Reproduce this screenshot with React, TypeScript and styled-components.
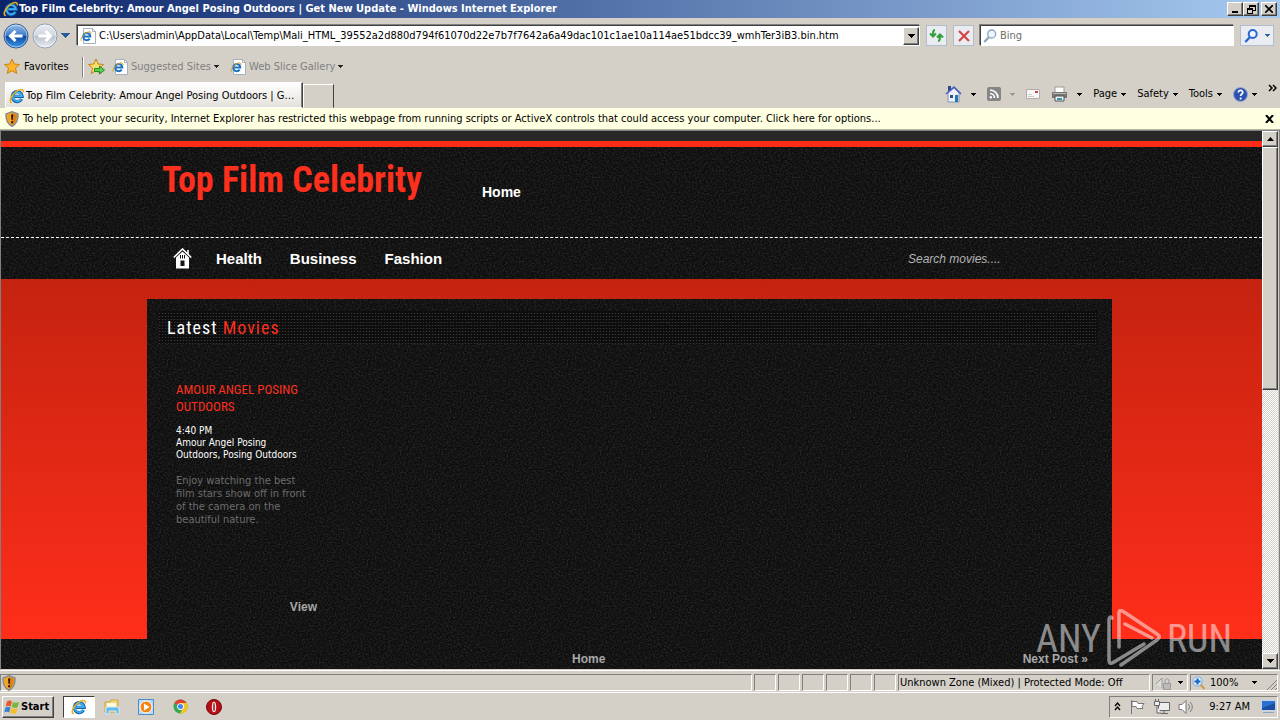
import React from 'react';
import styled, { createGlobalStyle, css } from 'styled-components';

const ui = '"DejaVu Sans Condensed", "DejaVu Sans", sans-serif';
const display = '"Roboto Condensed", "Liberation Sans Narrow", "Liberation Sans", sans-serif';
const grain = `url("data:image/svg+xml,%3Csvg xmlns='http://www.w3.org/2000/svg' width='200' height='200'%3E%3Cfilter id='n'%3E%3CfeTurbulence type='fractalNoise' baseFrequency='.6' numOctaves='2' stitchTiles='stitch'/%3E%3CfeColorMatrix values='0 0 0 0 1 0 0 0 0 1 0 0 0 0 1 .24 0 0 0 -.09'/%3E%3C/filter%3E%3Crect width='200' height='200' filter='url(%23n)'/%3E%3C/svg%3E")`;

const Global = createGlobalStyle`
  * { box-sizing: border-box; }
  body { margin: 0; background: #d4d0c8; color: #000; font: 11px/14px ${ui}; }
  button, input { font: inherit; color: inherit; margin: 0; padding: 0; border: 0; background: none; border-radius: 0; }
  h1, h2, h3, p { margin: 0; font-weight: normal; }
  a { color: inherit; text-decoration: none; }
  svg { display: block; flex: none; }
`;

const raised = css`
  background: #d4d0c8;
  border: 1px solid;
  border-color: #fff #404040 #404040 #fff;
  box-shadow: inset -1px -1px #808080;
`;
const sunken = css`
  border: 1px solid;
  border-color: #808080 #fff #fff #808080;
`;
const texture = css`
  background: #0d0d0d ${grain};
`;

const Window = styled.div`
  display: flex;
  flex-direction: column;
  height: 100vh;
  overflow: hidden;
  white-space: nowrap;
`;
const TitleBar = styled.header`
  display: flex;
  align-items: center;
  height: 18px;
  flex: none;
  padding: 0 3px;
  color: #fff;
  font-weight: bold;
  background: linear-gradient(90deg, #0a246a, #a6caf0);
`;
const TitleText = styled.span`flex: 1;`;
const WindowButton = styled.button<{ $gap?: boolean }>`
  ${raised}
  display: grid;
  place-items: center;
  width: 16px;
  height: 14px;
  margin-left: ${p => (p.$gap ? 2 : 0)}px;
`;
const AddressRow = styled.div`
  display: flex;
  align-items: center;
  flex: none;
  height: 35px;
  padding: 0 6px 0 3px;
  gap: 6px;
`;
const Nav = styled.div`
  display: flex;
  align-items: center;
  gap: 3px;
  width: 68px;
`;
const IconButton = styled.button`
  display: flex;
  align-items: center;
`;
const Field = styled.label<{ $basis?: number }>`
  display: flex;
  align-items: center;
  height: 21px;
  gap: 3px;
  padding-left: 2px;
  background: #fff;
  border: 1px solid;
  border-color: #404040 #fff #fff #404040;
  box-shadow: -1px -1px #808080;
  ${p => (p.$basis ? `flex: 0 1 ${p.$basis}px;` : 'flex: 1;')}
`;
const TextInput = styled.input`
  flex: 1;
  min-width: 0;
  outline: 0;
  height: 17px;
  &::placeholder { color: #6d6d6d; opacity: 1; }
`;
const DropButton = styled.button`
  ${raised}
  display: grid;
  place-items: center;
  width: 16px;
  height: 18px;
`;
const SoftButton = styled.button<{ $wide?: boolean }>`
  display: flex;
  align-items: center;
  justify-content: space-around;
  width: ${p => (p.$wide ? 34 : 21)}px;
  height: 21px;
  border: 1px solid #b4bccb;
  background: #e9ecf1;
`;
const FavoritesRow = styled.div`
  display: flex;
  align-items: center;
  flex: none;
  height: 27px;
  padding: 0 4px;
`;
const FavButton = styled.button<{ $muted?: boolean; $width?: number }>`
  display: flex;
  align-items: center;
  gap: 3px;
  color: ${p => (p.$muted ? '#808080' : '#000')};
  ${p => p.$width && `width: ${p.$width}px;`}
`;
const Rule = styled.span`
  width: 2px;
  height: 20px;
  margin-right: 4px;
  border-left: 1px solid #808080;
  border-right: 1px solid #fff;
`;
const TabRow = styled.div`
  display: flex;
  align-items: flex-end;
  flex: none;
  height: 28px;
  padding-left: 5px;
`;
const Tab = styled.button`
  display: flex;
  align-items: center;
  gap: 1px;
  width: 298px;
  height: 26px;
  padding: 2px 3px 0;
  background: linear-gradient(#fff, #e4e1db);
  border: 1px solid;
  border-color: #fff #404040 transparent #fff;
  box-shadow: inset -1px 0 #808080;
  span { overflow: hidden; text-overflow: ellipsis; }
`;
const NewTab = styled.button`
  width: 31px;
  height: 24px;
  border: 1px solid;
  border-color: #fff #404040 transparent #fff;
`;
const Commands = styled.div`
  display: flex;
  align-items: center;
  gap: 11px;
  height: 28px;
  margin-left: auto;
  padding-right: 3px;
`;
const Command = styled.button<{ $spaced?: boolean }>`
  display: flex;
  align-items: center;
  gap: ${p => (p.$spaced ? 9 : 4)}px;
`;
const InfoBar = styled.div`
  display: flex;
  align-items: center;
  flex: none;
  height: 22px;
  padding: 0 6px 0 5px;
  gap: 4px;
  background: #ffffe1;
  border-bottom: 1px solid #b8b8a4;
`;
const InfoText = styled.button`flex: 1; text-align: left;`;

const Viewport = styled.div`
  display: flex;
  flex: 1;
  min-height: 0;
  padding-right: 1px;
  border: 1px solid #808080;
  border-bottom-color: #d4d0c8;
`;
const Page = styled.main`
  position: relative;
  flex: 1;
  display: flex;
  flex-direction: column;
  overflow: hidden;
  font-family: "Liberation Sans", Arial, sans-serif;
  color: #fff;
`;
const TopStrip = styled.div`
  flex: none;
  height: 16px;
  background: #282828;
  border-bottom: 6px solid #fd2c19;
`;
const Masthead = styled.header`
  ${texture}
  flex: none;
  height: 91px;
  padding-right: 4px;
  border-bottom: 1px dashed #fff;
`;
const Wrap = styled.div`
  display: flex;
  width: 965px;
  max-width: 100%;
  margin: 0 auto;
`;
const SiteTitle = styled.h1`
  width: 335px;
  padding: 10px 0 0 15px;
  color: #fd2f1d;
  font: bold 36px/46px ${display};
`;
const TopLink = styled.a`
  padding-top: 36px;
  font-weight: bold;
  font-size: 14px;
  line-height: 18px;
`;
const Menu = styled.nav`
  ${texture}
  flex: none;
  height: 41px;
  padding-right: 4px;
`;
const MenuInner = styled(Wrap)`
  align-items: center;
  height: 41px;
  gap: 28px;
  padding: 0 78px 0 26px;
  font-weight: bold;
  font-size: 15px;
  line-height: 18px;
`;
const HomeLink = styled.a`margin-right: -4px;`;
const SearchInput = styled.input`
  width: 126px;
  margin-left: auto;
  font-style: italic;
  font-size: 12px;
  font-weight: normal;
  &::placeholder { color: #b4b4b4; opacity: 1; }
`;
const Backdrop = styled.div`
  flex: 1;
  min-height: 0;
  display: flex;
  padding: 20px 4px 0 0;
  background: linear-gradient(#c42310, #ff2e1a);
`;
const Panel = styled.section`
  ${texture}
  width: 965px;
  max-width: 100%;
  margin: 0 auto;
  padding: 12px 14px 0 12px;
`;
const PanelTitle = styled.h2`
  height: 33px;
  padding-left: 8px;
  font: 18px/33px ${display};
  letter-spacing: 1px;
  background: conic-gradient(#333 25%, transparent 0) 0 0 / 3px 3px;
  background: linear-gradient(#0d0d0d 2px, transparent 2px) 0 0 / 3px 3px, linear-gradient(90deg, #363636 1px, transparent 1px) 0 0 / 3px 3px;
  span { color: #fd2f1d; }
`;
const Post = styled.article`
  width: 158px;
  padding: 37px 0 0 17px;
  font-family: ${ui};
  white-space: normal;
`;
const PostTitle = styled.h3`
  width: 136px;
  color: #fd2f1d;
  font: 13px/17px ${display};
  text-transform: uppercase;
`;
const Meta = styled.p`
  width: 136px;
  margin-top: 10px;
  font-size: 10px;
  line-height: 12px;
`;
const Blurb = styled.p`
  width: 136px;
  margin-top: 13px;
  color: #6c6c6c;
  line-height: 13px;
`;
const ViewLink = styled.a`
  display: block;
  margin-top: 73px;
  text-align: right;
  color: #a8a8a8;
  font: bold 12px/16px "Liberation Sans", sans-serif;
`;
const Pager = styled.footer`
  ${texture}
  flex: none;
  height: 30px;
  padding-right: 4px;
`;
const PagerInner = styled(Wrap)`
  justify-content: space-between;
  padding: 12px 24px 0 425px;
  color: #a8a8a8;
  font-weight: bold;
  font-size: 12px;
  line-height: 16px;
`;
const Watermark = styled.div`
  position: absolute;
  right: 30px;
  bottom: 0;
  display: flex;
  align-items: center;
  gap: 6px;
  color: #fff;
  opacity: 0.5;
  pointer-events: none;
  font: 38px/60px ${display};
`;
const Scrollbar = styled.div`
  display: flex;
  flex-direction: column;
  flex: none;
  width: 16px;
  background: repeating-conic-gradient(#fff 0 25%, #d4d0c8 0 50%) 0 0 / 2px 2px;
`;
const ScrollButton = styled.button`
  ${raised}
  display: grid;
  place-items: center;
  height: 16px;
`;
const ScrollThumb = styled.div`
  ${raised}
  height: 48%;
`;
const Track = styled.div`flex: 1;`;

const StatusBar = styled.div`
  display: flex;
  flex: none;
  height: 23px;
  gap: 2px;
  padding: 3px 2px 1px 0;
  border-top: 1px solid #fff;
  border-bottom: 1px solid #fff;
`;
const Cell = styled.div<{ $width?: number }>`
  ${sunken}
  display: flex;
  align-items: center;
  gap: 4px;
  padding-left: 1px;
  ${p => (p.$width ? `width: ${p.$width}px; flex: none;` : 'flex: 1;')}
`;
const Taskbar = styled.footer`
  display: flex;
  align-items: center;
  flex: none;
  height: 27px;
  padding: 0 2px;
`;
const StartButton = styled.button`
  ${raised}
  display: flex;
  align-items: center;
  gap: 1px;
  width: 52px;
  height: 22px;
  padding-left: 1px;
  margin-right: 9px;
  font-weight: bold;
`;
const TaskButton = styled.button<{ $active?: boolean }>`
  display: grid;
  place-items: center;
  width: ${p => (p.$active ? 32 : 34)}px;
  height: 22px;
  ${p => p.$active && `background: #fff; border: 1px solid; border-color: #404040 #fff #fff #404040;`}
`;
const Tray = styled.div`
  ${sunken}
  display: flex;
  align-items: center;
  gap: 8px;
  height: 22px;
  margin-left: auto;
  padding: 0 1px 0 4px;
`;
const Clock = styled.time`margin: 0 3px 0 7px;`;

const Caret = ({ color = '#000', size = 5 }: { color?: string; size?: number }) => (
  <svg width={size} height={Math.ceil(size / 2)} viewBox="0 0 6 3" shapeRendering="crispEdges"><path d="M0 0h6L3 3z" fill={color} /></svg>
);
const IELogo = ({ size = 16 }: { size?: number }) => (
  <svg width={size} height={size} viewBox="0 0 16 16" fill="none">
    <path d="M12.6 11A5 5 0 1 1 13.2 8.3H5.2" stroke="#145fae" strokeWidth="3.2" />
    <path d="M12.2 11A4.6 4.6 0 1 1 12.8 8.1H5.4" stroke="#3fb0ef" strokeWidth="1.8" />
    <path d="M3 14.6C-.7 14.6 1.7 7.8 6.6 4 10.4 1 15 .4 14.3 4.4" stroke="#e9ae18" strokeWidth="1.5" />
  </svg>
);
const IEPage = () => (
  <svg width="16" height="16" viewBox="0 0 16 16" fill="none">
    <path d="M3.5.5h9l3 3v12h-12z" fill="#fff" stroke="#a7b0bd" /><path d="M12.5.5v3h3" stroke="#a7b0bd" />
    <path d="M9.7 10.6A3.6 3.6 0 1 1 10.3 8.6H4" stroke="#1b73c4" strokeWidth="2" />
    <path d="M1.6 13C-.2 11.5 2.5 7 6 5s5.500-1.200 5 1" stroke="#d8a520" />
  </svg>
);
const Round = ({ flip, blue }: { flip?: boolean; blue?: boolean }) => (
  <svg width="26" height="26" viewBox="0 0 26 26" fill="none">
    <defs>
      <linearGradient id={blue ? 'rb' : 'rg'} x2="0" y2="1">
        <stop stopColor={blue ? '#9cc2ea' : '#eceff4'} /><stop offset=".48" stopColor={blue ? '#3b78c8' : '#cfd4de'} />
        <stop offset=".5" stopColor={blue ? '#0d469f' : '#b6becb'} /><stop offset="1" stopColor={blue ? '#3b9be8' : '#eef1f5'} />
      </linearGradient>
    </defs>
    <circle cx="13" cy="13" r="12" fill={`url(#${blue ? 'rb' : 'rg'})`} stroke={blue ? '#315b94' : '#8f9db4'} />
    <circle cx="13" cy="13" r="11" stroke="#fff" strokeOpacity=".5" />
    <path d={flip ? 'M6.500 13h12M13.500 8l5 5-5 5' : 'M19.500 13h-12M12.500 8l-5 5 5 5'} stroke="#fff" strokeWidth="3" />
  </svg>
);
const Shield = () => (
  <svg width="14" height="16" viewBox="0 0 14 16">
    <path d="M7 .7 13 3c.4 6-1.500 10-6 12.300C2.500 13 .6 9 1 3z" fill="#f0a52a" stroke="#7d8798" strokeWidth="1.300" />
    <path d="M7 2v12c3.500-2 5-5.500 4.800-10.200z" fill="#d9801c" /><path d="M6 3.500h2.200L7.700 9H6.500zM6.100 10.200h2v2h-2z" fill="#2d1600" />
  </svg>
);
const Star = ({ add }: { add?: boolean }) => (
  <svg width="17" height="17" viewBox="0 0 17 17">
    <path d="m8 1 2.200 5 5.300.5-4 3.600 1.200 5.400L8 12.700l-4.700 2.800 1.200-5.400-4-3.600L5.800 6z" fill={add ? '#f8dd68' : '#fbb52d'} stroke="#c78414" />
    {add && <path d="M6.500 10.500h5V8l5 4-5 4v-2.500h-5z" fill="#5bd04c" stroke="#238a24" />}
  </svg>
);
const Lens = ({ color, flip, size = 14 }: { color: string; flip?: boolean; size?: number }) => (
  <svg width={size} height={size} viewBox="0 0 14 14" fill="none" stroke={color}>
    <circle cx="8.700" cy="5" r="4" strokeWidth={flip ? 1.300 : 2} fill="#eef5ff" /><path d="M6 8 1.300 13" strokeWidth="2.400" />
  </svg>
);
const HouseIcon = () => (
  <svg width="17" height="18" viewBox="0 0 17 18">
    <path d="M3 1h3v5H3z" fill="#31449b" /><path d="M3 8 9 3l5 5v9H3z" fill="#edf1fb" stroke="#8594bb" />
    <path d="m1 9 8-7 7 7" fill="none" stroke="#4961b8" strokeWidth="1.600" /><path d="M5 10h3v3H5z" fill="#344b86" /><path d="M10 10h3v7h-3z" fill="#2678ac" />
  </svg>
);
const RssIcon = () => (
  <svg width="14" height="14" viewBox="0 0 14 14" fill="none" stroke="#fff" strokeWidth="1.700">
    <rect width="14" height="14" rx="2" fill="#858585" stroke="none" /><path d="M3 6.500A4.500 4.500 0 0 1 7.500 11M3 3a8 8 0 0 1 8 8" /><circle cx="3.800" cy="10.200" r="1.200" fill="#fff" stroke="none" />
  </svg>
);
const MailIcon = () => (
  <svg width="14" height="10" viewBox="0 0 14 10"><path d="M.5.500h13v9H.500z" fill="#f8f5f5" stroke="#b5aaaa" /><path d="M9 2h3v2H9z" fill="#c94444" /><path d="M2 5.500h4M2 7.500h6" stroke="#ccc" /></svg>
);
const PrinterIcon = () => (
  <svg width="17" height="16" viewBox="0 0 17 16"><path d="M4 1h9v6H4z" fill="#fff" stroke="#999" /><path d="M1 6h15v6H1z" fill="#777" /><path d="M2 7h13v1H2z" fill="#b6b6b6" /><path d="M4 10h9v5H4z" fill="#e6f2f6" stroke="#555" /><path d="M6 12h5v2H6z" fill="#3b93a7" /></svg>
);
const HelpIcon = () => (
  <svg width="15" height="15" viewBox="0 0 15 15" fill="none"><circle cx="7.500" cy="7.500" r="7" fill="#2c51b1" stroke="#9dabc8" /><path d="M5.300 5.500c0-3 4.600-2.700 4.500 0 0 1.500-2.200 1.500-2.200 3.500M7.600 10.500v2" stroke="#fff" strokeWidth="1.700" /></svg>
);
const ZoomIcon = () => (
  <svg width="14" height="14" viewBox="0 0 14 14" fill="none"><path d="m8.500 8.500 4 4.500" stroke="#d19a49" strokeWidth="2.200" /><circle cx="5.500" cy="5.500" r="4.700" fill="#d9edff" stroke="#78a8d8" /><path d="M5.500 2.500v6M2.500 5.500h6" stroke="#1563bd" strokeWidth="2" /></svg>
);
const WindowsFlag = () => (
  <svg width="16" height="16" viewBox="0 0 16 16"><path d="M3 2.500c2-1.400 3.400-1 5 0L6.700 7.600c-1.700-1-3.200-1-5 0z" fill="#e8562b" /><path d="M9 3c2 1 3.800 1 6-.2L13.700 8c-2 1.200-3.900 1-6 0z" fill="#79b63c" /><path d="M1.500 8.600c1.800-1.200 3.300-1 5 0L5.200 13.500c-1.600-1-3-1-5 0z" fill="#3b80d2" /><path d="M7.400 9c2.200 1 4 1 6.100 0l-1.300 5c-2.200 1.200-4 1-6.100 0z" fill="#f6bf29" /></svg>
);
const Folder = () => (
  <svg width="16" height="16" viewBox="0 0 16 16"><path d="M1 3h5l1-2h7v12H1z" fill="#f4d775" stroke="#c9a544" /><path d="M3 4h9v4H3z" fill="#fffbe1" /><path d="M2 8h13v7h-3v-3H5v3H2z" fill="#65b9e8" stroke="#d3eafa" /></svg>
);
const Media = () => (
  <svg width="16" height="16" viewBox="0 0 16 16"><path d="M.5.500h15v15H.500z" fill="#b9daf6" stroke="#4d8ccc" /><circle cx="8" cy="8" r="6" fill="#f58616" stroke="#fff" /><path d="m6 4.500 5.500 3.500L6 11.500z" fill="#fff" /></svg>
);
const Chrome = () => (
  <svg width="15" height="15" viewBox="0 0 16 16"><circle cx="8" cy="8" r="7.500" fill="#35a853" /><path d="M8 8 1.500 4.300A7.500 7.500 0 0 1 14.500 4.300H8z" fill="#e3402f" /><path d="M8 8V4.300h6.500A7.500 7.500 0 0 1 7.500 15.500L11 9.500z" fill="#fbc617" /><circle cx="8" cy="8" r="3.600" fill="#fff" /><circle cx="8" cy="8" r="2.700" fill="#4285f4" /></svg>
);
const Opera = () => (
  <svg width="16" height="16" viewBox="0 0 16 16"><circle cx="8" cy="8" r="7.500" fill="#b50e17" stroke="#7c0509" /><ellipse cx="8" cy="8" rx="2.200" ry="5.300" fill="#f5e9e9" /><ellipse cx="8" cy="8" rx=".8" ry="4.300" fill="#a31319" /></svg>
);
const WhiteHouse = () => (
  <svg width="19" height="21" viewBox="0 0 19 21"><path d="M.8 9.500 9.500 1l8.700 8.500M15 2v4" fill="none" stroke="#fff" strokeWidth="1.600" /><path fillRule="evenodd" d="m9.500 3.500 6.500 6V20.500H3V9.500zM7.500 12.500v5.500h4v-5.500z" fill="#fff" /><path d="M7.500 7v3.500M9.500 7v3.500M11.500 7v3.500" stroke="#111" /></svg>
);
const PlayMark = () => (
  <svg width="54" height="60" viewBox="0 0 54 60" fill="none" stroke="#fff" strokeWidth="3.500" strokeLinecap="round" strokeLinejoin="round">
    <path d="M5 9C3 7 2 9 2 11v40c0 4 2 4 5 2l30-18" /><path d="M12 38V4c0-3 2-3 5-1l33 22c3 2 3 4 0 6L14 56" /><path d="m18 15 27 14" />
  </svg>
);

const commands = ['Page', 'Safety', 'Tools'];
const sections = ['Health', 'Business', 'Fashion'];
const heading = 'Top Film Celebrity';
const documentTitle = `${heading}: Amour Angel Posing Outdoors | Get New Update`;

export default function App() {
  return (
    <Window>
      <Global />
      <TitleBar>
        <IELogo />
        <TitleText>{documentTitle} - Windows Internet Explorer</TitleText>
        <WindowButton aria-label="Minimize"><svg width="8" height="8"><path d="M1 6h6v2H1z" /></svg></WindowButton>
        <WindowButton aria-label="Restore"><svg width="9" height="9" fill="none" stroke="#000" shapeRendering="crispEdges"><path d="M2.500 3V.500h6v5H6M3 1.500h5M.500 3.500h5v5h-5zM1 4.500h4" /></svg></WindowButton>
        <WindowButton $gap aria-label="Close"><svg width="8" height="8" stroke="#000" strokeWidth="1.600"><path d="m0 0 8 8M8 0 0 8" /></svg></WindowButton>
      </TitleBar>
      <AddressRow>
        <Nav>
          <IconButton aria-label="Back"><Round blue /></IconButton>
          <IconButton aria-label="Forward"><Round flip /></IconButton>
          <IconButton aria-label="Recent pages"><Caret size={9} color="#275c9b" /></IconButton>
        </Nav>
        <Field>
          <IEPage />
          <TextInput aria-label="Address" defaultValue="C:\Users\admin\AppData\Local\Temp\Mali_HTML_39552a2d880d794f61070d22e7b7f7642a6a49dac101c1ae10a114ae51bdcc39_wmhTer3iB3.bin.htm" />
          <DropButton aria-label="Show addresses"><Caret size={7} /></DropButton>
        </Field>
        <SoftButton aria-label="Refresh"><svg width="15" height="15" fill="none" stroke="#31a13a" strokeWidth="2"><path d="M6 2C4 2 4 4 4 8M1 5.500l3 3 3-3M9 13c2 0 2-2 2-6M8 9.500l3-3 3 3" /></svg></SoftButton>
        <SoftButton aria-label="Stop"><svg width="12" height="12" stroke="#d64545" strokeWidth="2.200"><path d="m1 1 10 10M11 1 1 11" /></svg></SoftButton>
        <Field $basis={254}>
          <Lens color="#8da5bd" flip />
          <TextInput aria-label="Search the web" placeholder="Bing" />
        </Field>
        <SoftButton $wide aria-label="Search"><Lens color="#2967d5" size={14} /><Caret color="#2967a5" /></SoftButton>
      </AddressRow>
      <FavoritesRow>
        <FavButton $width={78}><Star />Favorites</FavButton>
        <Rule />
        <FavButton $width={24} aria-label="Add to favorites"><Star add /></FavButton>
        <FavButton $muted $width={118}><IEPage />Suggested Sites <Caret color="#222" /></FavButton>
        <FavButton $muted><IEPage />Web Slice Gallery <Caret color="#222" /></FavButton>
      </FavoritesRow>
      <TabRow>
        <Tab><IELogo /><span>{documentTitle}</span></Tab>
        <NewTab aria-label="New tab" />
        <Commands>
          <Command $spaced aria-label="Home"><HouseIcon /><Caret /></Command>
          <Command $spaced aria-label="Feeds"><RssIcon /><Caret color="#999" /></Command>
          <Command aria-label="Read mail"><MailIcon /></Command>
          <Command $spaced aria-label="Print"><PrinterIcon /><Caret /></Command>
          {commands.map(name => <Command key={name}>{name}<Caret /></Command>)}
          <Command aria-label="Help"><HelpIcon /><Caret /></Command>
          <Command aria-label="More commands"><svg width="9" height="20" fill="none" stroke="#000" strokeWidth="1.500"><path d="m1 1 3 3-3 3M5 1l3 3-3 3" /></svg></Command>
        </Commands>
      </TabRow>
      <InfoBar>
        <Shield />
        <InfoText>To help protect your security, Internet Explorer has restricted this webpage from running scripts or ActiveX controls that could access your computer. Click here for options...</InfoText>
        <IconButton aria-label="Dismiss"><svg width="9" height="8" stroke="#000" strokeWidth="2"><path d="m1 0 7 8M8 0 1 8" /></svg></IconButton>
      </InfoBar>
      <Viewport>
        <Page>
          <TopStrip />
          <Masthead>
            <Wrap>
              <SiteTitle>{heading}</SiteTitle>
              <TopLink href="#home">Home</TopLink>
            </Wrap>
          </Masthead>
          <Menu>
            <MenuInner>
              <HomeLink href="#home" aria-label="Home"><WhiteHouse /></HomeLink>
              {sections.map(name => <a key={name} href={`#${name}`}>{name}</a>)}
              <SearchInput aria-label="Search movies" placeholder="Search movies...." />
            </MenuInner>
          </Menu>
          <Backdrop>
            <Panel>
              <PanelTitle>Latest <span>Movies</span></PanelTitle>
              <Post>
                <PostTitle>Amour Angel Posing<br />Outdoors</PostTitle>
                <Meta>4:40 PM<br />Amour Angel Posing<br />Outdoors, Posing Outdoors</Meta>
                <Blurb>Enjoy watching the best film stars show off in front of the camera on the beautiful nature.</Blurb>
                <ViewLink href="#view">View</ViewLink>
              </Post>
            </Panel>
          </Backdrop>
          <Pager>
            <PagerInner><a href="#home">Home</a><a href="#next">Next Post »</a></PagerInner>
          </Pager>
          <Watermark><span>ANY</span><PlayMark /><span>RUN</span></Watermark>
        </Page>
        <Scrollbar>
          <ScrollButton aria-label="Scroll up"><svg width="7" height="4"><path d="M0 4h7L3.500 0z" /></svg></ScrollButton>
          <Track><ScrollThumb /></Track>
          <ScrollButton aria-label="Scroll down"><Caret size={7} /></ScrollButton>
        </Scrollbar>
      </Viewport>
      <StatusBar>
        <Cell><Shield /></Cell>
        {[0, 1, 2, 3, 4, 5].map(n => <Cell key={n} $width={22} />)}
        <Cell $width={252}>Unknown Zone (Mixed) | Protected Mode: Off</Cell>
        <Cell $width={36}>
          <svg width="20" height="14" fill="none" stroke="#999"><path d="M2 8 8 2v10" fill="#ddd" /><path d="M9.500 7.500h7v6h-7z" fill="#bbb" /><path d="M11 7V5c0-3 4-3 4 0v2" /></svg>
          <Caret />
        </Cell>
        <Cell $width={88}><ZoomIcon />100%<Track /><Caret /><svg width="16" height="14" stroke="#808080"><path d="M6 14 16 4M10 14l6-6M14 14l2-2" /></svg></Cell>
      </StatusBar>
      <Taskbar>
        <StartButton><WindowsFlag />Start</StartButton>
        <TaskButton $active aria-label="Internet Explorer"><IELogo /></TaskButton>
        <TaskButton aria-label="Explorer"><Folder /></TaskButton>
        <TaskButton aria-label="Media Player"><Media /></TaskButton>
        <TaskButton aria-label="Chrome"><Chrome /></TaskButton>
        <TaskButton aria-label="Opera"><Opera /></TaskButton>
        <Tray>
          <IconButton aria-label="Show hidden icons"><svg width="7" height="9" fill="none" stroke="#000" strokeWidth="1.300"><path d="m1 4 2.500-3L6 4M1 8l2.500-3L6 8" /></svg></IconButton>
          <svg width="16" height="16" fill="#fff" stroke="#777"><path d="M2.500 1v14" /><path d="M3 2.500h5l1 2h6l-2 3 1 2H8l-1-2H3z" /></svg>
          <svg width="17" height="16" fill="#eee" stroke="#666"><path d="M5.500 3.500h11v8h-11zM8 14.500h7M11 12v2" /><path d="M1.500 2.500h5v4h-5zM2.500 0v2M5.500 0v2M4 7v7h4" /></svg>
          <svg width="16" height="16" fill="#fff" stroke="#777"><path d="M1 5.500h3l4-4v13l-4-4H1z" /><path d="M10 5c2 2 2 4 0 6M12 3c3 3 3 7 0 10" fill="none" /></svg>
          <Clock>9:27 AM</Clock>
          <svg width="15" height="14"><path d="M.5.500h14v10H.500z" fill="#2871cf" stroke="#bed5ef" /><path d="m1 8 13-5v7H1z" fill="#1a4e9f" /><path d="M2 12h11v1H2z" fill="#8fa4bf" /></svg>
        </Tray>
      </Taskbar>
    </Window>
  );
}
